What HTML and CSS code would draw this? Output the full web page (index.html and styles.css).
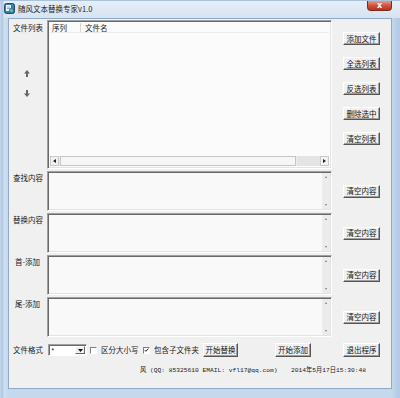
FILE: index.html
```html
<!DOCTYPE html>
<html lang="zh-CN">

<head>
  <meta charset="UTF-8">
  <title>随风文本替换专家v1.0</title>
  <link rel="stylesheet" href="styles.css">
</head>

<body>
  <div class="window">
    <div class="titlebar">
      <svg class="appicon" width="11" height="11" viewBox="0 0 11 11">
        <rect x="0.5" y="0.5" width="10" height="10" rx="2" fill="#3b7fa8" stroke="#1d4f6e" />
        <rect x="2" y="2" width="5" height="6" fill="#f4f8fb" />
        <path d="M3 4h3M3 5.5h3" stroke="#6a8da3" stroke-width="0.7" />
        <circle cx="7.5" cy="7.5" r="2.2" fill="#47c0c9" stroke="#1d4f6e" stroke-width="0.6" />
      </svg>
      <span class="title">随风文本替换专家v1.0</span>
      <span class="close">x</span>
    </div>

    <div class="client">
      <div class="main">
        <!-- 文件列表 -->
        <div class="lbl lbl-list">
          <span>文件列表</span>
          <div class="arrows">
            <svg width="6" height="7" viewBox="0 0 6 7"><path d="M3 0L6 3.5H4V7H2V3.5H0Z" fill="#666" /></svg>
            <svg width="6" height="7" viewBox="0 0 6 7"><path d="M3 7L6 3.5H4V0H2V3.5H0Z" fill="#666" /></svg>
          </div>
        </div>
        <div class="list sunken">
          <div class="list-head">
            <span class="col-no">序列</span>
            <span class="col-name">文件名</span>
          </div>
          <div class="list-body"></div>
          <div class="hscroll">
            <span class="sbtn"><svg width="3" height="4" viewBox="0 0 3 4"><path d="M3 0V4L0 2Z" fill="#222" /></svg></span>
            <span class="thumb"></span>
            <span class="track"></span>
            <span class="sbtn"><svg width="3" height="4" viewBox="0 0 3 4"><path d="M0 0V4L3 2Z" fill="#222" /></svg></span>
          </div>
        </div>
        <div class="btncol">
          <button class="btn">添加文件</button>
          <button class="btn">全选列表</button>
          <button class="btn">反选列表</button>
          <button class="btn">删除选中</button>
          <button class="btn">清空列表</button>
        </div>

        <!-- 查找内容 -->
        <div class="lbl">查找内容</div>
        <div class="ta sunken"><div class="vscroll"><i class="up"></i><i class="down"></i></div></div>
        <div class="side"><button class="btn">清空内容</button></div>

        <!-- 替换内容 -->
        <div class="lbl">替换内容</div>
        <div class="ta sunken"><div class="vscroll"><i class="up"></i><i class="down"></i></div></div>
        <div class="side"><button class="btn">清空内容</button></div>

        <!-- 首-添加 -->
        <div class="lbl lbl-short">首-添加</div>
        <div class="ta sunken"><div class="vscroll"><i class="up"></i><i class="down"></i></div></div>
        <div class="side"><button class="btn">清空内容</button></div>

        <!-- 尾-添加 -->
        <div class="lbl lbl-short">尾-添加</div>
        <div class="ta sunken"><div class="vscroll"><i class="up"></i><i class="down"></i></div></div>
        <div class="side"><button class="btn">清空内容</button></div>
      </div>

      <div class="bottom">
        <span class="fmt-lbl">文件格式</span>
        <div class="combo">
          <span class="combo-val">*</span>
          <span class="combo-btn"><svg width="5" height="3" viewBox="0 0 5 3"><path d="M0 0H5L2.5 3Z" fill="#111" /></svg></span>
        </div>
        <span class="chk"></span>
        <span class="chk-lbl chk-lbl1">区分大小写</span>
        <span class="chk checked"><svg width="6" height="6" viewBox="0 0 6 6"><path d="M0.8 3L2.3 4.6L5.2 1.2" fill="none" stroke="#111" stroke-width="1.1" /></svg></span>
        <span class="chk-lbl chk-lbl2">包含子文件夹</span>
        <button class="btn btn-replace">开始替换</button>
        <button class="btn btn-add">开始添加</button>
        <button class="btn btn-exit">退出程序</button>
      </div>

      <div class="status">
        <span class="st-author">风 (QQ: 85325610 EMAIL: vfl17@qq.com)</span>
        <span class="st-time">2014年5月17日15:30:48</span>
      </div>
    </div>
  </div>
</body>

</html>
```

FILE: styles.css
```css
* {
  margin: 0;
  padding: 0;
  box-sizing: border-box;
}

body {
  width: 400px;
  height: 398px;
  overflow: hidden;
  font-family: "Noto Sans CJK SC", "Noto Sans", sans-serif;
  font-size: 7.5px;
  line-height: 10px;
  color: #1a1a1a;
  background: #fff;
}

/* 窗口外框 */
.window {
  width: 400px;
  height: 398px;
  padding: 0 8px 9px 8px;
  display: flex;
  flex-direction: column;
  background: linear-gradient(90deg, #c9dbee 0, #a9c4e3 2px, #cfdfef 4px, #c6d8ec 8px, #c6d8ec 392px, #b3cbe6 398px);
  border-top: 1px solid #aac2dc;
}

.titlebar {
  height: 17px;
  display: flex;
  align-items: flex-start;
  margin-left: -4px;
  background: linear-gradient(#e6eef7, #d6e3f1);
  margin-right: -8px;
  padding-right: 8px;
}

.appicon {
  margin-top: 2px;
}

.title {
  margin: 3px 0 0 3px;
  color: #222;
}

.close {
  margin-left: auto;
  width: 25px;
  height: 10px;
  border: 1px solid #7a2b1f;
  border-top: none;
  border-radius: 0 0 4px 4px;
  background: linear-gradient(#e6998c, #d0533d 50%, #b9331f);
  color: #fff;
  font-family: "DejaVu Sans", sans-serif;
  font-weight: bold;
  font-size: 8px;
  line-height: 9px;
  text-align: center;
}

/* 客户区 */
.client {
  flex: 1;
  background: #f0f0f0;
  border: 1px solid #8fa9c6;
  padding: 1px 0 0 4px;
}

.main {
  display: grid;
  grid-template-columns: 34px 285px 48px;
  grid-template-rows: 149px repeat(4, 40px);
  row-gap: 2px;
}

.lbl {
  padding-top: 2px;
}

.lbl-short {
  padding-left: 2px;
}

.lbl-list {
  padding-top: 3px;
  display: flex;
  flex-direction: column;
}

.arrows {
  margin: 37px 0 0 11px;
  display: flex;
  flex-direction: column;
  gap: 13px;
}

.sunken {
  border: 1px solid;
  border-color: #a0a0a0 #ffffff #ffffff #a0a0a0;
  box-shadow: inset 1px 1px 0 #696969, inset -1px -1px 0 #e3e3e3;
}

.list {
  background: #fbfbfb;
  padding: 2px;
  display: flex;
  flex-direction: column;
}

.list-head {
  height: 10px;
  display: flex;
  border-bottom: 1px solid #ececec;
}

.col-no {
  width: 31px;
  padding-left: 2px;
  border-right: 1px solid #d8d8d8;
}

.col-name {
  padding-left: 4px;
}

.list-body {
  flex: 1;
}

.hscroll {
  height: 10px;
  display: flex;
  background: #ececec;
}

.sbtn {
  width: 9px;
  display: flex;
  align-items: center;
  justify-content: center;
  background: #f2f2f2;
  border: 1px solid #c9c9c9;
}

.thumb {
  flex: 1;
  background: #f6f6f6;
  border: 1px solid #c6c6c6;
  margin: 0 1px;
}

.track {
  width: 23px;
  background: #e4e4e4;
}

.btncol {
  padding: 12px 0 0 11px;
  display: flex;
  flex-direction: column;
  gap: 12px;
}

.btn {
  appearance: none;
  width: 37px;
  height: 13px;
  font: inherit;
  line-height: 10px;
  color: #111;
  background: #f0f0f0;
  border: 1px solid;
  border-color: #fff #555 #555 #fff;
  box-shadow: inset -1px -1px 0 #a0a0a0;
  display: flex;
  align-items: center;
  justify-content: center;
}

.side {
  padding-left: 11px;
  display: flex;
  align-items: center;
}

.ta {
  background: #f9f9f9;
  display: flex;
  justify-content: flex-end;
  padding: 1px 1px 1px 2px;
}

.vscroll {
  width: 8px;
  background: #ececec;
  display: flex;
  flex-direction: column;
  justify-content: space-between;
  align-items: center;
  padding: 3px 0;
}

.vscroll i {
  width: 0;
  height: 0;
  border-left: 1.5px solid transparent;
  border-right: 1.5px solid transparent;
}

.vscroll .up {
  border-bottom: 2px solid #777;
}

.vscroll .down {
  border-top: 2px solid #777;
}

/* 底部操作栏 */
.bottom {
  height: 14px;
  margin-top: 6px;
  display: flex;
  align-items: center;
}

.fmt-lbl {
  width: 35px;
}

.combo {
  width: 39px;
  height: 12px;
  background: #fff;
  border: 1px solid;
  border-color: #a0a0a0 #fff #fff #a0a0a0;
  box-shadow: inset 1px 1px 0 #696969;
  display: flex;
}

.combo-val {
  flex: 1;
  padding-left: 2px;
  line-height: 11px;
}

.combo-btn {
  width: 10px;
  margin: 1px 1px 1px 0;
  background: #f0f0f0;
  border: 1px solid;
  border-color: #fff #696969 #696969 #fff;
  display: flex;
  align-items: center;
  justify-content: center;
}

.chk {
  width: 7px;
  height: 7px;
  margin-left: 3px;
  background: #fff;
  border: 1px solid;
  border-color: #808080 #fff #fff #808080;
  display: flex;
  align-items: center;
  justify-content: center;
}

.chk.checked {
  margin-left: 0;
}

.chk-lbl {
  margin-left: 4px;
}

.chk-lbl1 {
  width: 42px;
}

.chk-lbl2 {
  width: 49px;
}

.btn-replace {
  width: 35px;
  height: 14px;
}

.btn-add {
  width: 36px;
  height: 14px;
  margin-left: 37px;
}

.btn-exit {
  height: 14px;
  margin-left: 32px;
}

.status {
  margin-top: 9px;
  padding-left: 127px;
  display: flex;
  font-family: "Liberation Mono", "Noto Sans CJK SC", monospace;
  font-size: 6.25px;
}

.st-author {
  width: 151px;
  white-space: nowrap;
}

.st-time {
  white-space: nowrap;
}
```
